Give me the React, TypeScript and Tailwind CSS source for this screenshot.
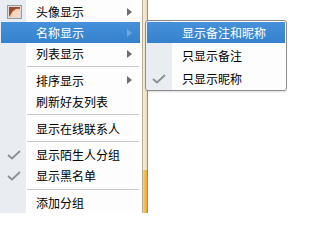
import React from "react";

function Arrow({ active }: { active?: boolean }) {
  return (
    <svg width="5" height="8" viewBox="0 0 5 8" className="shrink-0">
      <path d="M0 0 L5 4 L0 8 Z" fill={active ? "#6fa6dc" : "#6e6e6e"} />
    </svg>
  );
}

function Check() {
  return (
    <svg width="14" height="10" viewBox="0 0 14 10">
      <path d="M1 5 L5 8.5 L13 1" fill="none" stroke="#8a8f96" strokeWidth="1.8" />
    </svg>
  );
}

function Avatar() {
  return (
    <svg width="15" height="14" viewBox="0 0 15 14">
      <rect x="0.5" y="0.5" width="14" height="13" fill="#dcdcdc" stroke="#9a9a9a" />
      <rect x="2" y="2" width="11" height="10" fill="#f3c7a6" />
      <path d="M2 2 H13 V4 C9 3 6 5 4 9 L2 12 Z" fill="#9b4a2c" />
      <path d="M6 7 C8 5 11 5 13 6 V12 H5 Z" fill="#f7d6bd" />
    </svg>
  );
}

type Item = { label: string; icon?: "avatar" | "check"; arrow?: boolean; active?: boolean };

function Row({ item }: { item: Item }) {
  return (
    <div
      className={
        "flex items-center h-[21px] ml-[1px] mr-[2px] " +
        (item.active ? "bg-[linear-gradient(to_bottom,#4791da,#3581cd)] text-white" : "text-black")
      }
    >
      <div className="w-[25px] h-full flex items-center justify-center pl-[1px]">
        {item.icon === "avatar" && <Avatar />}
        {item.icon === "check" && <Check />}
      </div>
      <span className="pl-[10px] flex-1 text-[12px] leading-[21px]">{item.label}</span>
      {item.arrow && (
        <div className="pr-[8px] flex items-center">
          <Arrow active={item.active} />
        </div>
      )}
    </div>
  );
}

function Sep() {
  return (
    <div className="h-[6px] flex items-center pl-[27px] pr-[3px]">
      <div className="h-px flex-1 bg-[#c9c9c9]" />
    </div>
  );
}

export default function App() {
  return (
    <div className="relative w-[287px] h-[213px] overflow-hidden bg-white flex font-['Noto_Sans_CJK_SC','Noto_Sans',sans-serif]">
      <div className="w-[142px] h-full flex flex-col pt-[1px] bg-[linear-gradient(to_right,#e9edf1_26px,#fdfdfd_26px)]">
        <Row item={{ label: "头像显示", icon: "avatar", arrow: true }} />
        <Row item={{ label: "名称显示", arrow: true, active: true }} />
        <Row item={{ label: "列表显示", arrow: true }} />
        <Sep />
        <Row item={{ label: "排序显示", arrow: true }} />
        <Row item={{ label: "刷新好友列表" }} />
        <Sep />
        <Row item={{ label: "显示在线联系人" }} />
        <Sep />
        <Row item={{ label: "显示陌生人分组", icon: "check" }} />
        <Row item={{ label: "显示黑名单", icon: "check" }} />
        <Sep />
        <Row item={{ label: "添加分组" }} />
      </div>
      <div className="w-[6px] h-full flex flex-col border-l border-l-[#b5aa98] border-r border-r-[#c48a3c]">
        <div className="h-[170px] bg-[linear-gradient(to_right,#f6efe0,#e9d8b4)]" />
        <div className="flex-1 bg-[linear-gradient(to_right,#f8d27a,#eba52a)]" />
      </div>
      <div className="flex-1 bg-white" />

      <div className="absolute left-[145px] top-[20px] w-[142px] h-[71px] border border-[#8e8e8e] rounded-[3px] shadow-[1px_1px_2px_rgba(0,0,0,0.15)] bg-[linear-gradient(to_right,#e9edf1_26px,#fdfdfd_26px)] flex flex-col">
        <div className="h-[23px] py-[1px] px-[1px]">
          <div className="h-full flex items-center bg-[linear-gradient(to_bottom,#4791da,#3581cd)] text-white">
            <span className="pl-[35px] text-[12px] leading-[21px]">显示备注和昵称</span>
          </div>
        </div>
        <div className="h-[23px] flex items-center text-black">
          <span className="pl-[36px] text-[12px]">只显示备注</span>
        </div>
        <div className="h-[23px] flex items-center text-black">
          <div className="w-[26px] flex justify-center">
            <Check />
          </div>
          <span className="pl-[10px] text-[12px]">只显示昵称</span>
        </div>
      </div>
    </div>
  );
}
